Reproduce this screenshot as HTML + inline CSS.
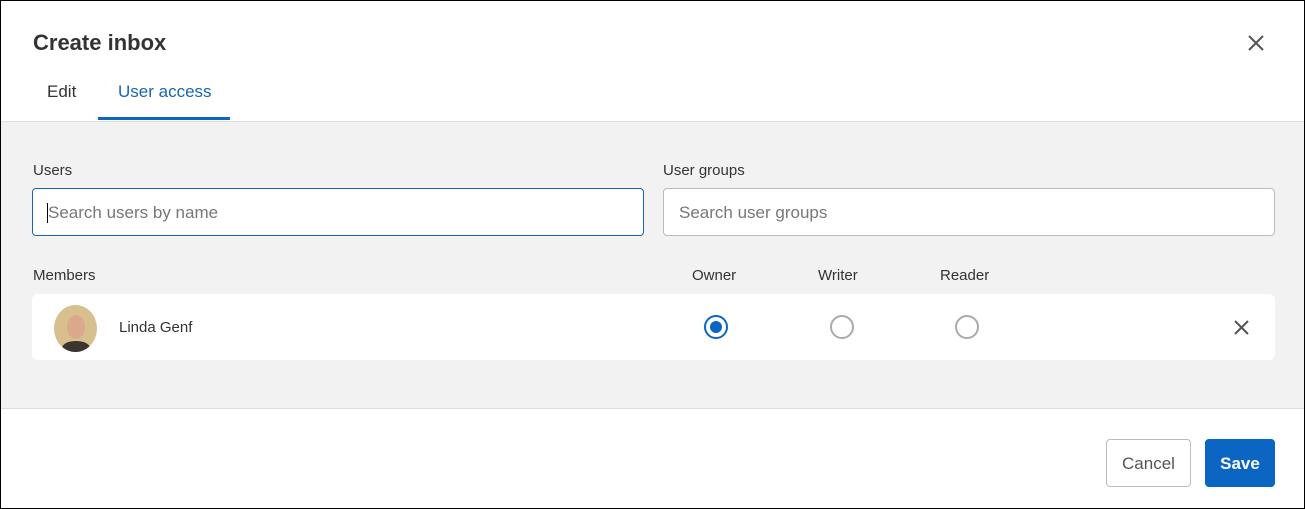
<!DOCTYPE html>
<html><head><style>
*{box-sizing:border-box;margin:0;padding:0}
body{width:1305px;height:509px;overflow:hidden;font-family:"Liberation Sans",sans-serif;background:#fff;position:relative;color:#333}
.frame{position:absolute;left:0;top:0;width:1305px;height:509px;border:1px solid #000}
.abs{position:absolute}
.gray{left:1px;top:121px;width:1303px;height:288px;background:#f2f2f2;border-top:1px solid #ddd;border-bottom:1px solid #ddd}
.input{height:48px;border:1px solid #bbb;border-radius:4px;background:#fff;font-size:17px;color:#777;padding:14px 15px}
.radio{width:24px;height:24px;border-radius:50%;border:2px solid #aaa;background:#fff}
.lbl{font-size:15px;color:#333}
</style></head><body>
<div class="frame"></div>
<div class="abs" style="left:33px;top:30px;font-size:22px;font-weight:bold;color:#333">Create inbox</div>
<svg class="abs" style="left:1247px;top:34px" width="18" height="18"><path d="M2 2L16 16M16 2L2 16" stroke="#555" stroke-width="2"/></svg>
<div class="abs" style="left:47px;top:82px;font-size:17px;color:#333">Edit</div>
<div class="abs" style="left:118px;top:82px;font-size:17px;color:#1a64b4">User access</div>
<div class="abs" style="left:98px;top:117px;width:132px;height:3px;background:#0a66c2"></div>
<div class="abs gray"></div>
<div class="abs lbl" style="left:33px;top:162px">Users</div>
<div class="abs lbl" style="left:663px;top:162px">User groups</div>
<div class="abs input" style="left:32px;top:188px;width:612px;border-color:#1a64b4">Search users by name</div>
<div class="abs" style="left:47px;top:203px;width:1px;height:20px;background:#000"></div>
<div class="abs input" style="left:663px;top:188px;width:612px">Search user groups</div>
<div class="abs lbl" style="left:33px;top:267px">Members</div>
<div class="abs lbl" style="left:692px;top:267px">Owner</div>
<div class="abs lbl" style="left:818px;top:267px">Writer</div>
<div class="abs lbl" style="left:940px;top:267px">Reader</div>
<div class="abs" style="left:32px;top:294px;width:1243px;height:66px;background:#fff;border-radius:6px"></div>
<div class="abs" style="left:54px;top:305px;width:43px;height:47px;border-radius:50%;overflow:hidden;background:#d8bf8e">
<div style="position:absolute;left:13px;top:10px;width:18px;height:24px;border-radius:50%;background:#dca88c"></div>
<div style="position:absolute;left:8px;top:36px;width:28px;height:14px;border-radius:50% 50% 0 0;background:#3c3430"></div>
</div>
<div class="abs" style="left:119px;top:319px;font-size:15px;color:#333">Linda Genf</div>
<div class="abs radio" style="left:704px;top:315px;border-color:#0a66c2"><div style="margin:4px;width:12px;height:12px;border-radius:50%;background:#0a66c2"></div></div>
<div class="abs radio" style="left:830px;top:315px"></div>
<div class="abs radio" style="left:955px;top:315px"></div>
<svg class="abs" style="left:1233px;top:319px" width="17" height="17"><path d="M2 2L15 15M15 2L2 15" stroke="#555" stroke-width="2"/></svg>
<div class="abs" style="left:1106px;top:439px;width:85px;height:48px;border:1px solid #bbb;border-radius:4px;font-size:17px;color:#555;text-align:center;line-height:48px">Cancel</div>
<div class="abs" style="left:1205px;top:439px;width:70px;height:48px;background:#0a66c2;border-radius:4px;font-size:17px;font-weight:bold;color:#fff;text-align:center;line-height:49px">Save</div>
</body></html>
